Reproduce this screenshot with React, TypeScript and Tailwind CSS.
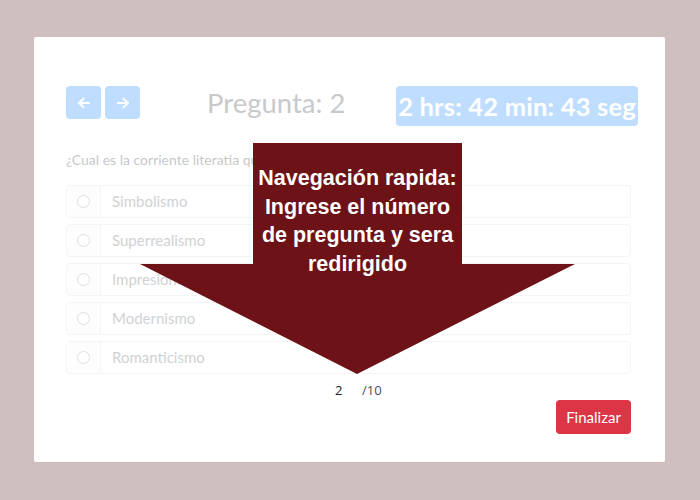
import React from 'react';

const options = ['Simbolismo', 'Superrealismo', 'Impresionismo', 'Modernismo', 'Romanticismo'];

function Arrow({ dir }: { dir: 'left' | 'right' }) {
  return (
    <svg width="14" height="14" viewBox="0 0 16 16" fill="none" stroke="white" strokeWidth="2.2" strokeLinecap="round" strokeLinejoin="round">
      {dir === 'left' ? (
        <>
          <path d="M14 8H2.5" />
          <path d="M7.5 3L2.5 8l5 5" />
        </>
      ) : (
        <>
          <path d="M2 8h11.5" />
          <path d="M8.5 3l5 5-5 5" />
        </>
      )}
    </svg>
  );
}

// Tutorial callout drawn on top of the faded exam page
function Callout() {
  return (
    <div className="absolute left-[140px] top-[143px] h-[232px] w-[436px]">
      <svg width="436" height="232" viewBox="0 0 436 232" className="absolute inset-0">
        <polygon points="113,0 322,0 322,121 435,121 217,231 0,121 113,121" fill="#6d1317" />
      </svg>
      <div
        className="absolute left-[108px] top-[21px] w-[219px] text-center text-[21.5px] font-bold leading-[28.5px] text-white"
        style={{ fontFamily: '"Liberation Sans", Arial, sans-serif' }}
      >
        Navegación rapida:
        <br />
        Ingrese el número
        <br />
        de pregunta y sera
        <br />
        redirigido
      </div>
    </div>
  );
}

export default function App() {
  return (
    <div
      className="relative h-[500px] w-[700px] bg-[#d0bfbf] pt-[37px] pl-[34px]"
      style={{ fontFamily: 'Lato, "Open Sans", sans-serif' }}
    >
      <div className="h-[425px] w-[631px] rounded-[2px] bg-white pt-[49px] pl-[32px] pr-[34px]">
        <div className="flex h-[40px] items-start">
          <div className="flex gap-[4px]">
            <button className="flex h-[33px] w-[35px] items-center justify-center rounded-[4px] bg-[#bfdeff]">
              <Arrow dir="left" />
            </button>
            <button className="flex h-[33px] w-[35px] items-center justify-center rounded-[4px] bg-[#bfdeff]">
              <Arrow dir="right" />
            </button>
          </div>
          <div className="ml-[67px] mt-[1px] text-[27.5px] leading-[32px] text-[#c8c9ca]">Pregunta: 2</div>
          <div className="ml-auto mr-[-7px] flex h-[40px] items-center rounded-[4px] bg-[#bfdeff] px-[2px] text-[25.5px] font-bold tracking-[0.2px] text-white">
            2 hrs: 42 min: 43 seg
          </div>
        </div>

        <p className="mt-[24px] text-[14px] leading-[20px] text-[#c6c8cb]">
          ¿Cual es la corriente literatia que inicio con Charles Baudelaire?
        </p>

        <div className="mt-[15px] flex flex-col gap-[6px]">
          {options.map((o) => (
            <div key={o} className="flex h-[33px] overflow-hidden rounded-[4px] border border-[#f3f4f5]">
              <div className="flex w-[34px] items-center justify-center border-r border-[#f3f4f5] bg-[#fdfdfe]">
                <span className="h-[13px] w-[13px] rounded-full border border-[#dedfe0] bg-white" />
              </div>
              <div className="flex items-center pl-[11px] text-[15px] text-[#cfd2d5]">{o}</div>
            </div>
          ))}
        </div>

        <div className="mt-[7px] flex pl-[269px] text-[13px] leading-[18px]" style={{ fontFamily: '"Open Sans", sans-serif' }}>
          <span className="w-[23px] text-[#212529]">2</span>
          <span className="ml-[4px] text-[#495057]">/10</span>
        </div>

        <div className="mt-[1px] flex justify-end">
          <button className="h-[34px] w-[75px] rounded-[4px] bg-[#dc3545] text-[15px] text-white">Finalizar</button>
        </div>
      </div>
      <Callout />
    </div>
  );
}
